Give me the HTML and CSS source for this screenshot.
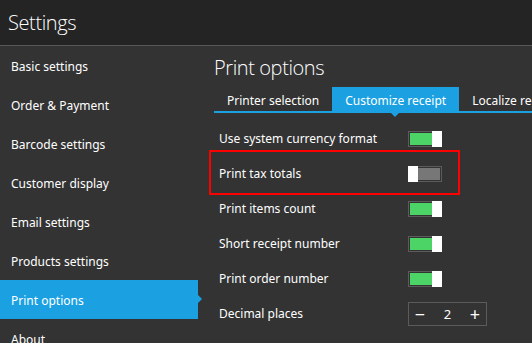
FILE: index.html
```html
<!DOCTYPE html>
<html lang="en">
<head>
    <meta charset="UTF-8">
    <title>Settings</title>
    <link rel="stylesheet" href="styles.css">
</head>
<body>
    <header class="app-header">
        <h1 class="app-title">Settings</h1>
    </header>

    <div class="layout">
        <nav class="sidebar">
            <a class="nav-item">Basic settings</a>
            <a class="nav-item">Order &amp; Payment</a>
            <a class="nav-item">Barcode settings</a>
            <a class="nav-item">Customer display</a>
            <a class="nav-item">Email settings</a>
            <a class="nav-item">Products settings</a>
            <a class="nav-item active">Print options</a>
            <a class="nav-item">About</a>
        </nav>

        <main class="content">
            <h2 class="page-title">Print options</h2>

            <div class="tabs">
                <span class="tab">Printer selection</span>
                <span class="tab active">Customize receipt</span>
                <span class="tab">Localize receipt</span>
            </div>

            <div class="options">
                <div class="option">
                    <span class="option-label">Use system currency format</span>
                    <span class="toggle on"><span class="thumb"></span></span>
                </div>
                <div class="option highlight">
                    <span class="option-label">Print tax totals</span>
                    <span class="toggle"><span class="thumb"></span></span>
                </div>
                <div class="option">
                    <span class="option-label">Print items count</span>
                    <span class="toggle on"><span class="thumb"></span></span>
                </div>
                <div class="option">
                    <span class="option-label">Short receipt number</span>
                    <span class="toggle on"><span class="thumb"></span></span>
                </div>
                <div class="option">
                    <span class="option-label">Print order number</span>
                    <span class="toggle on"><span class="thumb"></span></span>
                </div>
                <div class="option">
                    <span class="option-label">Decimal places</span>
                    <div class="stepper">
                        <span class="step-btn">&minus;</span>
                        <span class="step-value">2</span>
                        <span class="step-btn">+</span>
                    </div>
                </div>
            </div>
        </main>
    </div>
</body>
</html>
```

FILE: styles.css
```css
/* styles.css */

body {
    margin: 0;
    background-color: #333;
    color: #fff;
    font-family: "Noto Sans", "Open Sans", sans-serif;
    font-size: 12px;
    overflow: hidden;
}

.app-header {
    height: 45px;
    background-color: #242424;
    border-bottom: 1px solid #575757;
}

.app-title {
    margin: 0;
    padding: 9px 0 0 8px;
    font-family: "Open Sans", sans-serif;
    font-weight: 300;
    font-size: 20px;
    letter-spacing: -0.4px;
    line-height: 28px;
}

.layout {
    display: flex;
}

.sidebar {
    flex-shrink: 0;
    width: 198px;
    display: flex;
    flex-direction: column;
}

.nav-item {
    position: relative;
    height: 39px;
    line-height: 41px;
    padding-left: 11px;
}

.nav-item.active {
    background-color: #1ba1e2;
}

.nav-item.active::after {
    content: "";
    position: absolute;
    right: -4px;
    top: 15px;
    border-left: 4px solid #1ba1e2;
    border-top: 4px solid transparent;
    border-bottom: 4px solid transparent;
}

.content {
    flex: 1;
    min-width: 0;
    overflow: hidden;
    padding-left: 16px;
}

.page-title {
    margin: 0;
    padding-top: 7px;
    font-family: "Open Sans", sans-serif;
    font-weight: 300;
    font-size: 20px;
    letter-spacing: -0.4px;
    line-height: 30px;
    height: 34px;
}

.tabs {
    display: flex;
    border-bottom: 2px solid #1ba1e2;
    white-space: nowrap;
}

.tab {
    position: relative;
    padding: 0 13px;
    height: 24px;
    line-height: 27px;
}

.tab.active {
    background-color: #1ba1e2;
}

.tab.active::after {
    content: "";
    position: absolute;
    left: 59px;
    bottom: -6px;
    border-top: 4px solid #1ba1e2;
    border-left: 4px solid transparent;
    border-right: 4px solid transparent;
}

.options {
    padding-top: 8px;
    width: 251px;
    margin-left: -5px;
}

.option {
    position: relative;
    display: flex;
    align-items: center;
    justify-content: space-between;
    height: 35px;
    padding-left: 10px;
}

.option.highlight::after {
    content: "";
    position: absolute;
    left: 0;
    right: 0;
    top: -6px;
    bottom: -4px;
    border: 2px solid #f00;
}

.option-label {
    flex: 1;
}

.toggle {
    position: relative;
    width: 32px;
    height: 14px;
    margin-right: 18px;
    border: 1px solid #5b5b5b;
    box-shadow: inset 0 0 0 1px #333;
    background-color: #777;
}

.toggle.on {
    background-color: #4cd466;
}

.toggle .thumb {
    position: absolute;
    top: -1px;
    left: -1px;
    width: 10px;
    height: 16px;
    background-color: #fff;
}

.toggle.on .thumb {
    left: auto;
    right: -1px;
}

.stepper {
    display: flex;
    align-items: center;
    justify-content: space-between;
    width: 69px;
    height: 22px;
    margin-right: -27px;
    border: 1px solid #5b5b5b;
    padding: 0 4px;
    flex-shrink: 0;
}

.step-btn {
    width: 14px;
    text-align: center;
    font-size: 18px;
    line-height: 22px;
}

.step-value {
    font-size: 13px;
}
```
